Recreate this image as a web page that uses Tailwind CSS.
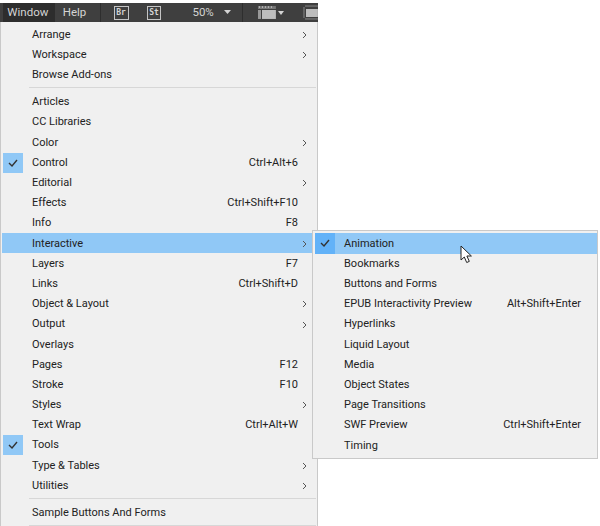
<!DOCTYPE html>
<html lang="en">
<head>
<meta charset="utf-8" />
<title>Window menu</title>
<script src="https://cdn.jsdelivr.net/npm/@tailwindcss/browser@4"></script>
</head>
<body class="bg-white">
<div class="relative w-[600px] h-[526px] overflow-hidden font-['Roboto',sans-serif] text-[11px] text-[#222]">
  <!-- top bar -->
  <div class="w-[318px] mt-[3px] h-[19px] bg-[#3f3f3f] flex items-center text-[#d4d4d4] text-[11.500px]">
    <div class="ml-[3px] w-[52px] h-full bg-[#2d2d2d] flex items-center justify-center pr-[2px]">Window</div>
    <div class="ml-[8px] w-[24px]">Help</div>
    <div class="ml-[13px] w-px h-full bg-[#2e2e2e]"></div>
    <div class="ml-[13px] w-[15px] h-[14px] border border-[#c4c4c4] flex items-center justify-center text-[8px] font-['DejaVu_Sans_Mono',monospace] font-bold">Br</div>
    <div class="ml-[18px] w-[15px] h-[14px] border border-[#c4c4c4] flex items-center justify-center text-[8px] font-['DejaVu_Sans_Mono',monospace] font-bold">St</div>
    <div class="ml-[31px] w-[25px]">50%</div>
    <svg class="ml-[7px]" width="8" height="5"><path d="M0 0h7l-3.500 4z" fill="#d4d4d4"/></svg>
    <div class="ml-[10px] w-px h-full bg-[#2e2e2e]"></div>
    <svg class="ml-[14px]" width="20" height="15" viewBox="0 0 20 15"><path d="M1 1h18v3H1z" fill="#777"/><path d="M2 2h1M5 2h1M8 2h1M11 2h1M14 2h1" stroke="#eee"/><path d="M1 5h3v9H1z" fill="#999"/><path d="M5 5h14v9H5z" fill="#bdbdbd"/></svg>
    <svg class="ml-[1px]" width="6" height="4"><path d="M0 0h6l-3 4z" fill="#d4d4d4"/></svg>
    <svg class="ml-[19px]" width="15" height="15" viewBox="0 0 15 15"><path d="M1 2v11M2 1h13M2 14h13" stroke="#888" fill="none"/><path d="M3 4h12v8H3z" fill="#bdbdbd"/></svg>
  </div>

  <!-- main menu -->
  <div class="w-[318px] h-[504px] bg-[#f0f0f0] border-r border-l border-[#c9c9c9] pt-[2.400px] [&>div]:pt-[1px]">
    <div class="flex items-center h-[20.200px] pl-[31px]"><span>Arrange</span><svg class="ml-auto mr-[10px]" width="5" height="8" viewBox="0 0 5 8"><path d="M1 1l3 3-3 3" stroke="#555" fill="none"/></svg></div>
    <div class="flex items-center h-[20.200px] pl-[31px]"><span>Workspace</span><svg class="ml-auto mr-[10px]" width="5" height="8" viewBox="0 0 5 8"><path d="M1 1l3 3-3 3" stroke="#555" fill="none"/></svg></div>
    <div class="flex items-center h-[20.200px] pl-[31px]"><span>Browse Add-ons</span></div>
    <div class="h-px bg-[#d7d7d7] ml-[28px] mr-[1px] mt-[2.500px] mb-[3.500px]"></div>
    <div class="flex items-center h-[20.200px] pl-[31px]"><span>Articles</span></div>
    <div class="flex items-center h-[20.200px] pl-[31px]"><span>CC Libraries</span></div>
    <div class="flex items-center h-[20.200px] pl-[31px]"><span>Color</span><svg class="ml-auto mr-[10px]" width="5" height="8" viewBox="0 0 5 8"><path d="M1 1l3 3-3 3" stroke="#555" fill="none"/></svg></div>
    <div class="relative flex items-center h-[20.200px] pl-[31px]">
      <div class="absolute left-[2px] top-0 w-[20px] h-full bg-[#90c8f6] flex items-center justify-center"><svg width="10" height="8" viewBox="0 0 10 8"><path d="M1 4l3 3 5-6" stroke="#333" stroke-width="1.400" fill="none"/></svg></div>
      <span>Control</span><span class="ml-auto mr-[19px]">Ctrl+Alt+6</span>
    </div>
    <div class="flex items-center h-[20.200px] pl-[31px]"><span>Editorial</span><svg class="ml-auto mr-[10px]" width="5" height="8" viewBox="0 0 5 8"><path d="M1 1l3 3-3 3" stroke="#555" fill="none"/></svg></div>
    <div class="flex items-center h-[20.200px] pl-[31px]"><span>Effects</span><span class="ml-auto mr-[19px]">Ctrl+Shift+F10</span></div>
    <div class="flex items-center h-[20.200px] pl-[31px]"><span>Info</span><span class="ml-auto mr-[19px]">F8</span></div>
    <div class="flex items-center h-[20.200px] pl-[30px] ml-[1px] bg-[#90c8f6]"><span>Interactive</span><svg class="ml-auto mr-[10px]" width="5" height="8" viewBox="0 0 5 8"><path d="M1 1l3 3-3 3" stroke="#555" fill="none"/></svg></div>
    <div class="flex items-center h-[20.200px] pl-[31px]"><span>Layers</span><span class="ml-auto mr-[19px]">F7</span></div>
    <div class="flex items-center h-[20.200px] pl-[31px]"><span>Links</span><span class="ml-auto mr-[19px]">Ctrl+Shift+D</span></div>
    <div class="flex items-center h-[20.200px] pl-[31px]"><span>Object &amp; Layout</span><svg class="ml-auto mr-[10px]" width="5" height="8" viewBox="0 0 5 8"><path d="M1 1l3 3-3 3" stroke="#555" fill="none"/></svg></div>
    <div class="flex items-center h-[20.200px] pl-[31px]"><span>Output</span><svg class="ml-auto mr-[10px]" width="5" height="8" viewBox="0 0 5 8"><path d="M1 1l3 3-3 3" stroke="#555" fill="none"/></svg></div>
    <div class="flex items-center h-[20.200px] pl-[31px]"><span>Overlays</span></div>
    <div class="flex items-center h-[20.200px] pl-[31px]"><span>Pages</span><span class="ml-auto mr-[19px]">F12</span></div>
    <div class="flex items-center h-[20.200px] pl-[31px]"><span>Stroke</span><span class="ml-auto mr-[19px]">F10</span></div>
    <div class="flex items-center h-[20.200px] pl-[31px]"><span>Styles</span><svg class="ml-auto mr-[10px]" width="5" height="8" viewBox="0 0 5 8"><path d="M1 1l3 3-3 3" stroke="#555" fill="none"/></svg></div>
    <div class="flex items-center h-[20.200px] pl-[31px]"><span>Text Wrap</span><span class="ml-auto mr-[19px]">Ctrl+Alt+W</span></div>
    <div class="relative flex items-center h-[20.200px] pl-[31px]">
      <div class="absolute left-[2px] top-0 w-[20px] h-full bg-[#90c8f6] flex items-center justify-center"><svg width="10" height="8" viewBox="0 0 10 8"><path d="M1 4l3 3 5-6" stroke="#333" stroke-width="1.400" fill="none"/></svg></div>
      <span>Tools</span>
    </div>
    <div class="flex items-center h-[20.200px] pl-[31px]"><span>Type &amp; Tables</span><svg class="ml-auto mr-[10px]" width="5" height="8" viewBox="0 0 5 8"><path d="M1 1l3 3-3 3" stroke="#555" fill="none"/></svg></div>
    <div class="flex items-center h-[20.200px] pl-[31px]"><span>Utilities</span><svg class="ml-auto mr-[10px]" width="5" height="8" viewBox="0 0 5 8"><path d="M1 1l3 3-3 3" stroke="#555" fill="none"/></svg></div>
    <div class="h-px bg-[#d7d7d7] ml-[28px] mr-[1px] mt-[2.500px] mb-[3.500px]"></div>
    <div class="flex items-center h-[20.200px] pl-[31px]"><span>Sample Buttons And Forms</span></div>
    <div class="h-px bg-[#d7d7d7] ml-[28px] mr-[1px] mt-[2.500px]"></div>
  </div>

  <!-- submenu flyout -->
  <div class="absolute left-[312px] top-[230px] w-[286px] h-[229px] bg-[#f0f0f0] border border-[#c9c9c9] pt-[2.400px] pl-[2px] [&>div]:pt-[1px]">
    <div class="relative flex items-center h-[20.200px] pl-[29px] bg-[#90c8f6]">
      <div class="absolute left-0 top-0 w-[20px] h-full bg-[#62b2f8] flex items-center justify-center"><svg width="10" height="8" viewBox="0 0 10 8"><path d="M1 4l3 3 5-6" stroke="#333" stroke-width="1.400" fill="none"/></svg></div>
      <span>Animation</span>
    </div>
    <div class="flex items-center h-[20.200px] pl-[29px]"><span>Bookmarks</span></div>
    <div class="flex items-center h-[20.200px] pl-[29px]"><span>Buttons and Forms</span></div>
    <div class="flex items-center h-[20.200px] pl-[29px]"><span>EPUB Interactivity Preview</span><span class="ml-auto mr-[16px]">Alt+Shift+Enter</span></div>
    <div class="flex items-center h-[20.200px] pl-[29px]"><span>Hyperlinks</span></div>
    <div class="flex items-center h-[20.200px] pl-[29px]"><span>Liquid Layout</span></div>
    <div class="flex items-center h-[20.200px] pl-[29px]"><span>Media</span></div>
    <div class="flex items-center h-[20.200px] pl-[29px]"><span>Object States</span></div>
    <div class="flex items-center h-[20.200px] pl-[29px]"><span>Page Transitions</span></div>
    <div class="flex items-center h-[20.200px] pl-[29px]"><span>SWF Preview</span><span class="ml-auto mr-[16px]">Ctrl+Shift+Enter</span></div>
    <div class="flex items-center h-[20.200px] pl-[29px]"><span>Timing</span></div>
  </div>

  <!-- mouse pointer -->
  <svg class="absolute left-[460px] top-[245px]" width="13" height="19" viewBox="0 0 13 19"><path d="M1 1v14l3.300-3 2.400 5.500 2.600-1.100-2.400-5.400h4.500z" fill="#fff" stroke="#222" stroke-width="1"/></svg>
</div>
</body>
</html>
